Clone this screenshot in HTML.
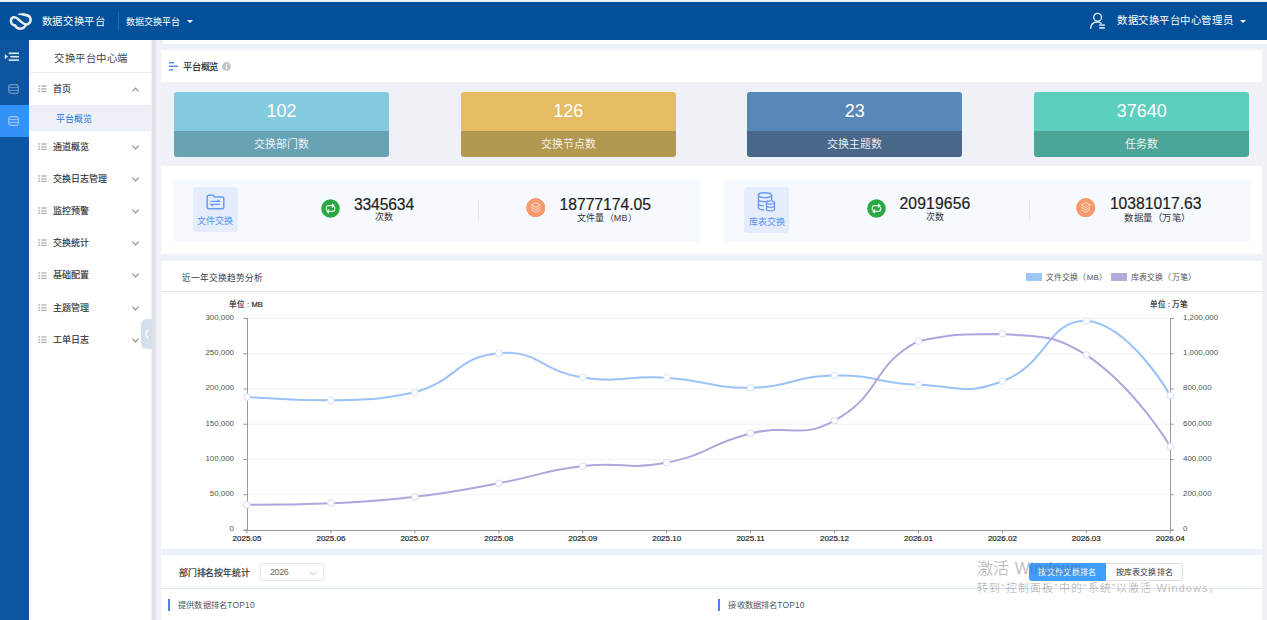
<!DOCTYPE html>
<html lang="zh-CN">
<head>
<meta charset="utf-8">
<title>数据交换平台</title>
<style>
*{margin:0;padding:0;box-sizing:border-box;}
html,body{width:1267px;height:620px;overflow:hidden;background:#eef1f6;font-family:"Liberation Sans",sans-serif;color:#333;}
.abs{position:absolute;}
.t{position:absolute;white-space:nowrap;line-height:1;}
#topline{left:0;top:0;width:1267px;height:2px;background:#eef0f3;}
#header{left:0;top:2px;width:1267px;height:38.4px;background:#03509a;}
#iconbar{left:0;top:40.4px;width:28.8px;height:580px;background:#0d569f;}
#iconact{left:0;top:104.6px;width:28.8px;height:32.4px;background:#3391f7;}
#menu{left:28.8px;top:40px;width:122.5px;height:580px;background:#fff;}
#strip{left:151.5px;top:40px;width:4.5px;height:580px;background:linear-gradient(to right,#dedfe4,#e5e6eb);}
#menusep{left:29px;top:72px;width:122.5px;height:1px;background:#ebebf0;}
#menuhl{left:29px;top:105px;width:122.5px;height:26px;background:#edf1f7;}
.mi{position:absolute;left:53px;font-size:9px;line-height:1;color:#333;font-weight:bold;white-space:nowrap;}
.li{position:absolute;left:38px;width:9px;height:8px;}
.chev{position:absolute;left:132px;width:7px;height:5px;}
.panel{position:absolute;left:161px;width:1101px;background:#fff;}
.card{position:absolute;top:92px;width:215px;height:64.6px;border-radius:3px;overflow:hidden;}
.card .top{position:absolute;left:0;top:0;width:100%;height:38.8px;}
.card .bot{position:absolute;left:0;top:38.8px;width:100%;height:26px;}
.card .num{position:absolute;left:0;width:100%;top:9.3px;text-align:center;font-size:18px;line-height:20px;color:#fff;}
.card .lab{position:absolute;left:0;width:100%;top:8px;text-align:center;font-size:10.9px;line-height:11px;color:rgba(255,255,255,0.9);}
.box{position:absolute;top:178.5px;height:63px;background:#f6f9fe;border-radius:4px;}
.iblk{position:absolute;width:45.5px;height:45.5px;background:#e5edfc;border-radius:4px;}
.iblk .lb{position:absolute;left:0;width:100%;top:30.5px;text-align:center;font-size:9px;line-height:9px;color:#5b8ff2;}
.circ{position:absolute;width:19px;height:19px;border-radius:50%;}
.big{position:absolute;font-size:15.7px;line-height:16px;color:#222;white-space:nowrap;}
.sm{position:absolute;font-size:9px;line-height:9px;color:#333;white-space:nowrap;text-align:center;}
.vd{position:absolute;top:198.5px;width:1px;height:22px;background:#e3e6ee;}
svg text.ax{font-family:"Liberation Sans",sans-serif;font-size:7.9px;fill:#505050;}
svg text.axb{font-family:"Liberation Sans",sans-serif;font-size:8px;fill:#222;stroke:#222;stroke-width:0.18px;}
.wm{position:absolute;color:rgba(95,95,95,0.42);white-space:nowrap;font-family:"Liberation Sans",sans-serif;}
</style>
</head>
<body>
<div id="topline" class="abs"></div>
<div id="header" class="abs"></div>
<!-- logo -->
<svg class="abs" style="left:9px;top:12px" width="24" height="19" viewBox="0 0 24 19">
  <path d="M19.5,3.8 C22.6,5.8 22.4,10.8 18.5,12.3 C15,13.6 11.5,9.2 8.5,6.6 C6,4.4 2.6,4.6 2,8 C1.5,11 3.2,13.2 6,13.4 C7.2,15.8 10,17 12.5,16.6 C14.3,16.3 15.6,15.2 16.2,14" fill="none" stroke="#ececec" stroke-width="2.5" stroke-linecap="round"/>
  <path d="M9.3,2.2 C13,1.2 17.5,1.6 20.2,3.6 L19.5,5 C17,3.6 13,3 9.3,2.2 Z" fill="#f4f4f4" stroke="#f4f4f4" stroke-width="1"/>
</svg>
<div class="t" id="title" style="left:41.50px;top:16.60px;font-size:10.35px;letter-spacing:0.720px;color:#fff;">数据交换平台</div>
<div class="abs" style="left:117.5px;top:12px;width:1px;height:19px;background:#2f66a8;"></div>
<div class="t" id="subtitle" style="left:126.00px;top:18.10px;font-size:9.0px;letter-spacing:0.000px;color:#fff;">数据交换平台</div>
<div class="abs" style="left:186.5px;top:20px;width:0;height:0;border-left:3.2px solid transparent;border-right:3.2px solid transparent;border-top:3.4px solid #fff;"></div>
<!-- user -->
<svg class="abs" style="left:1089px;top:12px" width="18" height="18" viewBox="0 0 18 18">
  <circle cx="8.6" cy="5.2" r="3.9" fill="none" stroke="#eef3f9" stroke-width="1.3"/>
  <path d="M1.6,16.4 C1.9,12.4 4.6,10 8.2,10 C9.9,10 11.2,10.5 12.2,11.3" fill="none" stroke="#eef3f9" stroke-width="1.3" stroke-linecap="round"/>
  <rect x="10.2" y="12.3" width="5.6" height="1.5" fill="#dfe8f2"/>
  <rect x="10.2" y="15.1" width="5.6" height="1.6" fill="#dfe8f2"/>
</svg>
<div class="t" id="username" style="left:1117.00px;top:16.30px;font-size:10.4px;letter-spacing:0.560px;color:#fff;">数据交换平台中心管理员</div>
<div class="abs" style="left:1239.5px;top:20px;width:0;height:0;border-left:3.3px solid transparent;border-right:3.3px solid transparent;border-top:3.6px solid #fff;"></div>

<!-- icon bar -->
<div id="iconbar" class="abs"></div>
<div id="iconact" class="abs"></div>
<svg class="abs" style="left:4px;top:52px" width="16" height="10" viewBox="0 0 16 10">
  <path d="M0.8,1.9 L4,4.6 L0.8,7.3 Z" fill="#e2e9f2"/>
  <rect x="4.7" y="0.5" width="10.3" height="1.6" fill="#e2e9f2"/>
  <rect x="6.3" y="3.9" width="8.7" height="1.6" fill="#e2e9f2"/>
  <rect x="4.7" y="7.3" width="10.3" height="1.6" fill="#e2e9f2"/>
</svg>
<svg class="abs" style="left:7.5px;top:84px" width="11" height="10" viewBox="0 0 11 10">
  <rect x="0.7" y="0.6" width="9.6" height="8.8" rx="3" ry="2.4" fill="none" stroke="#6f97c6" stroke-width="1.1"/>
  <path d="M1,3.6 H10 M1,6.4 H10" stroke="#6f97c6" stroke-width="1"/>
</svg>
<svg class="abs" style="left:7.5px;top:116px" width="11" height="10" viewBox="0 0 11 10">
  <rect x="0.7" y="0.6" width="9.6" height="8.8" rx="3" ry="2.4" fill="none" stroke="#9cc6f6" stroke-width="1.1"/>
  <path d="M1,3.6 H10 M1,6.4 H10" stroke="#9cc6f6" stroke-width="1"/>
</svg>

<!-- menu -->
<div id="menu" class="abs"></div>
<div id="strip" class="abs"></div>
<div id="menusep" class="abs"></div>
<div id="menuhl" class="abs"></div>
<div class="t" id="menutitle" style="left:54.40px;top:53.80px;font-size:10.4px;letter-spacing:0.433px;color:#444;">交换平台中心端</div>
<svg class="li" style="top:85.2px" viewBox="0 0 9 8" width="9" height="8"><g fill="#a8a8a8"><rect x="0.2" y="0.4" width="1.9" height="1.2"/><rect x="0.2" y="3.3" width="1.9" height="1.2"/><rect x="0.2" y="5.8" width="1.9" height="1.2"/><rect x="3.2" y="0.4" width="5.4" height="1.2"/><rect x="3.2" y="3.3" width="5.4" height="1.2"/><rect x="3.2" y="5.8" width="5.4" height="1.2"/></g></svg>
<div class="t" id="mi0" style="left:53.00px;top:84.80px;font-size:9px;letter-spacing:0.000px;color:#333;-webkit-text-stroke:0.15px #333;">首页</div>
<svg class="chev" style="top:86.7px" viewBox="0 0 7 5" width="7" height="5"><path d="M0.4,4.3 L3.5,1 L6.6,4.3" fill="none" stroke="#8c8c8c" stroke-width="1.1"/></svg>
<svg class="li" style="top:143.2px" viewBox="0 0 9 8" width="9" height="8"><g fill="#a8a8a8"><rect x="0.2" y="0.4" width="1.9" height="1.2"/><rect x="0.2" y="3.3" width="1.9" height="1.2"/><rect x="0.2" y="5.8" width="1.9" height="1.2"/><rect x="3.2" y="0.4" width="5.4" height="1.2"/><rect x="3.2" y="3.3" width="5.4" height="1.2"/><rect x="3.2" y="5.8" width="5.4" height="1.2"/></g></svg>
<div class="t" id="mi1" style="left:53.00px;top:142.80px;font-size:9px;letter-spacing:0.000px;color:#333;-webkit-text-stroke:0.15px #333;">通道概览</div>
<svg class="chev" style="top:144.7px" viewBox="0 0 7 5" width="7" height="5"><path d="M0.4,0.7 L3.5,4 L6.6,0.7" fill="none" stroke="#8c8c8c" stroke-width="1.1"/></svg>
<svg class="li" style="top:175.2px" viewBox="0 0 9 8" width="9" height="8"><g fill="#a8a8a8"><rect x="0.2" y="0.4" width="1.9" height="1.2"/><rect x="0.2" y="3.3" width="1.9" height="1.2"/><rect x="0.2" y="5.8" width="1.9" height="1.2"/><rect x="3.2" y="0.4" width="5.4" height="1.2"/><rect x="3.2" y="3.3" width="5.4" height="1.2"/><rect x="3.2" y="5.8" width="5.4" height="1.2"/></g></svg>
<div class="t" id="mi2" style="left:53.00px;top:174.80px;font-size:9px;letter-spacing:0.000px;color:#333;-webkit-text-stroke:0.15px #333;">交换日志管理</div>
<svg class="chev" style="top:176.7px" viewBox="0 0 7 5" width="7" height="5"><path d="M0.4,0.7 L3.5,4 L6.6,0.7" fill="none" stroke="#8c8c8c" stroke-width="1.1"/></svg>
<svg class="li" style="top:207.2px" viewBox="0 0 9 8" width="9" height="8"><g fill="#a8a8a8"><rect x="0.2" y="0.4" width="1.9" height="1.2"/><rect x="0.2" y="3.3" width="1.9" height="1.2"/><rect x="0.2" y="5.8" width="1.9" height="1.2"/><rect x="3.2" y="0.4" width="5.4" height="1.2"/><rect x="3.2" y="3.3" width="5.4" height="1.2"/><rect x="3.2" y="5.8" width="5.4" height="1.2"/></g></svg>
<div class="t" id="mi3" style="left:53.00px;top:206.80px;font-size:9px;letter-spacing:0.000px;color:#333;-webkit-text-stroke:0.15px #333;">监控预警</div>
<svg class="chev" style="top:208.7px" viewBox="0 0 7 5" width="7" height="5"><path d="M0.4,0.7 L3.5,4 L6.6,0.7" fill="none" stroke="#8c8c8c" stroke-width="1.1"/></svg>
<svg class="li" style="top:239.2px" viewBox="0 0 9 8" width="9" height="8"><g fill="#a8a8a8"><rect x="0.2" y="0.4" width="1.9" height="1.2"/><rect x="0.2" y="3.3" width="1.9" height="1.2"/><rect x="0.2" y="5.8" width="1.9" height="1.2"/><rect x="3.2" y="0.4" width="5.4" height="1.2"/><rect x="3.2" y="3.3" width="5.4" height="1.2"/><rect x="3.2" y="5.8" width="5.4" height="1.2"/></g></svg>
<div class="t" id="mi4" style="left:53.00px;top:238.80px;font-size:9px;letter-spacing:0.000px;color:#333;-webkit-text-stroke:0.15px #333;">交换统计</div>
<svg class="chev" style="top:240.7px" viewBox="0 0 7 5" width="7" height="5"><path d="M0.4,0.7 L3.5,4 L6.6,0.7" fill="none" stroke="#8c8c8c" stroke-width="1.1"/></svg>
<svg class="li" style="top:271.5px" viewBox="0 0 9 8" width="9" height="8"><g fill="#a8a8a8"><rect x="0.2" y="0.4" width="1.9" height="1.2"/><rect x="0.2" y="3.3" width="1.9" height="1.2"/><rect x="0.2" y="5.8" width="1.9" height="1.2"/><rect x="3.2" y="0.4" width="5.4" height="1.2"/><rect x="3.2" y="3.3" width="5.4" height="1.2"/><rect x="3.2" y="5.8" width="5.4" height="1.2"/></g></svg>
<div class="t" id="mi5" style="left:53.00px;top:271.10px;font-size:9px;letter-spacing:0.000px;color:#333;-webkit-text-stroke:0.15px #333;">基础配置</div>
<svg class="chev" style="top:273.0px" viewBox="0 0 7 5" width="7" height="5"><path d="M0.4,0.7 L3.5,4 L6.6,0.7" fill="none" stroke="#8c8c8c" stroke-width="1.1"/></svg>
<svg class="li" style="top:304.2px" viewBox="0 0 9 8" width="9" height="8"><g fill="#a8a8a8"><rect x="0.2" y="0.4" width="1.9" height="1.2"/><rect x="0.2" y="3.3" width="1.9" height="1.2"/><rect x="0.2" y="5.8" width="1.9" height="1.2"/><rect x="3.2" y="0.4" width="5.4" height="1.2"/><rect x="3.2" y="3.3" width="5.4" height="1.2"/><rect x="3.2" y="5.8" width="5.4" height="1.2"/></g></svg>
<div class="t" id="mi6" style="left:53.00px;top:303.80px;font-size:9px;letter-spacing:0.000px;color:#333;-webkit-text-stroke:0.15px #333;">主题管理</div>
<svg class="chev" style="top:305.7px" viewBox="0 0 7 5" width="7" height="5"><path d="M0.4,0.7 L3.5,4 L6.6,0.7" fill="none" stroke="#8c8c8c" stroke-width="1.1"/></svg>
<svg class="li" style="top:336.4px" viewBox="0 0 9 8" width="9" height="8"><g fill="#a8a8a8"><rect x="0.2" y="0.4" width="1.9" height="1.2"/><rect x="0.2" y="3.3" width="1.9" height="1.2"/><rect x="0.2" y="5.8" width="1.9" height="1.2"/><rect x="3.2" y="0.4" width="5.4" height="1.2"/><rect x="3.2" y="3.3" width="5.4" height="1.2"/><rect x="3.2" y="5.8" width="5.4" height="1.2"/></g></svg>
<div class="t" id="mi7" style="left:53.00px;top:336.00px;font-size:9px;letter-spacing:0.000px;color:#333;-webkit-text-stroke:0.15px #333;">工单日志</div>
<svg class="chev" style="top:337.9px" viewBox="0 0 7 5" width="7" height="5"><path d="M0.4,0.7 L3.5,4 L6.6,0.7" fill="none" stroke="#8c8c8c" stroke-width="1.1"/></svg>
<div class="t" id="pingtai" style="left:56.00px;top:114.50px;font-size:9.0px;letter-spacing:0.000px;color:#1f73d2;font-weight:500;">平台概览</div>
<div class="abs" style="left:141px;top:319px;width:11px;height:30px;background:#d3dfec;border-radius:6px 0 0 6px;"></div>
<svg class="abs" style="left:144px;top:328px" width="6" height="12" viewBox="0 0 6 12"><path d="M4.5,1 L1.5,6 L4.5,11" fill="none" stroke="#fff" stroke-width="1.1"/></svg>

<!-- top white strip in content -->
<div class="abs" style="left:163px;top:40px;width:1104px;height:4px;background:#fff;"></div>

<!-- panel 1 -->
<div class="panel" style="top:50px;height:32.2px;"></div>
<svg class="abs" style="left:169px;top:61.5px" width="9" height="9" viewBox="0 0 9 9">
  <rect x="0" y="0" width="5" height="1.4" fill="#4b90e6"/>
  <rect x="0" y="3.6" width="9" height="1.4" fill="#4b90e6"/>
  <rect x="0" y="7.2" width="4" height="1.4" fill="#4b90e6"/>
</svg>
<div class="t" id="ptgl" style="left:183.10px;top:62.50px;font-size:9.2px;letter-spacing:-0.200px;color:#222;-webkit-text-stroke:0.12px #222;">平台概览</div>
<svg class="abs" style="left:221.5px;top:61.5px" width="9" height="9" viewBox="0 0 9 9">
  <circle cx="4.5" cy="4.5" r="4.4" fill="#c4c4c4"/>
  <rect x="3.9" y="3.6" width="1.3" height="3.6" fill="#fff"/>
  <rect x="3.9" y="1.8" width="1.3" height="1.2" fill="#fff"/>
</svg>

<!-- cards -->
<div class="card" style="left:174px;"><div class="top" style="background:#84cbe0"></div><div class="bot" style="background:#6aa2b5"></div><div class="num">102</div><div class="bot"><div class="lab">交换部门数</div></div></div>
<div class="card" style="left:460.7px;"><div class="top" style="background:#e5bb63"></div><div class="bot" style="background:#b39851"></div><div class="num">126</div><div class="bot"><div class="lab">交换节点数</div></div></div>
<div class="card" style="left:747.2px;"><div class="top" style="background:#5987b7"></div><div class="bot" style="background:#486789"></div><div class="num">23</div><div class="bot"><div class="lab">交换主题数</div></div></div>
<div class="card" style="left:1034.3px;"><div class="top" style="background:#5dcfbe"></div><div class="bot" style="background:#4ba598"></div><div class="num">37640</div><div class="bot"><div class="lab">任务数</div></div></div>

<!-- panel 2 -->
<div class="panel" style="top:166.2px;height:87.8px;"></div>
<div class="box" style="left:172.5px;width:528px;"></div>
<div class="box" style="left:722.5px;width:528px;"></div>
<div class="iblk" style="left:192.5px;top:186.7px;"><div class="lb">文件交换</div></div>
<svg class="abs" style="left:206px;top:194px" width="19" height="16" viewBox="0 0 19 16">
  <path d="M1.2,3 C1.2,2 1.8,1.3 2.8,1.3 H7 L8.6,3 H16 C17,3 17.8,3.8 17.8,4.8 V13 C17.8,14 17,14.8 16,14.8 H2.8 C1.8,14.8 1.2,14 1.2,13 Z" fill="none" stroke="#6a9bf3" stroke-width="1.5"/>
  <path d="M4.5,7.4 H13.5 L11.5,5.8 M14,10.4 H5 L7,12" fill="none" stroke="#6a9bf3" stroke-width="1.3"/>
</svg>
<div class="iblk" style="left:743.8px;top:187px;"><div class="lb">库表交换</div></div>
<svg class="abs" style="left:757px;top:191.5px" width="19" height="20" viewBox="0 0 19 20">
  <ellipse cx="8" cy="3.2" rx="6.6" ry="2.4" fill="none" stroke="#6a9bf3" stroke-width="1.4"/>
  <path d="M1.4,3.2 V15.5 C1.4,16.8 3.5,17.8 7,17.9 M14.6,3.2 V8 M1.4,7.5 C1.4,8.8 4,9.6 8,9.6 C9.5,9.6 10.5,9.5 11.5,9.2 M1.4,11.8 C1.4,13 3.2,13.7 7,13.9" fill="none" stroke="#6a9bf3" stroke-width="1.4"/>
  <ellipse cx="13.5" cy="10.5" rx="4" ry="1.6" fill="#e5edfc" stroke="#6a9bf3" stroke-width="1.3"/>
  <path d="M9.5,10.5 V17.3 C9.5,18.2 11.3,18.9 13.5,18.9 C15.7,18.9 17.5,18.2 17.5,17.3 V10.5 M9.5,13.8 C9.5,14.7 11.3,15.3 13.5,15.3 C15.7,15.3 17.5,14.7 17.5,13.8" fill="none" stroke="#6a9bf3" stroke-width="1.3"/>
</svg>
<div class="vd" style="left:477.5px"></div>
<div class="vd" style="left:1028.5px"></div>
<svg class="abs" style="left:320.9px;top:199.2px" width="19" height="19" viewBox="0 0 19 19"><circle cx="9.5" cy="9.5" r="9.3" fill="#29a841"/><path d="M5.3,10.6 V8.7 C5.3,7.6 6.1,6.7 7.3,6.7 H13 M11.4,5.2 L13.1,6.7 L11.4,8.2 M13.7,8.4 V10.3 C13.7,11.4 12.9,12.3 11.7,12.3 H6 M7.6,13.8 L5.9,12.3 L7.6,10.8" fill="none" stroke="#e6f4e8" stroke-width="1.25" stroke-linecap="round" stroke-linejoin="round"/></svg>
<svg class="abs" style="left:525.5999999999999px;top:198.10000000000002px" width="19.4" height="19.4" viewBox="0 0 19.4 19.4"><circle cx="9.7" cy="9.7" r="9.6" fill="#f49a6d"/><path d="M9.7,4.6 L14.2,7 L9.7,9.4 L5.2,7 Z" fill="none" stroke="#fde3d5" stroke-width="0.9"/><path d="M5.2,9.4 L9.7,11.8 L14.2,9.4 M5.2,11.8 L9.7,14.2 L14.2,11.8" fill="none" stroke="#fde3d5" stroke-width="0.9"/></svg>
<svg class="abs" style="left:867.0px;top:199.2px" width="19" height="19" viewBox="0 0 19 19"><circle cx="9.5" cy="9.5" r="9.3" fill="#29a841"/><path d="M5.3,10.6 V8.7 C5.3,7.6 6.1,6.7 7.3,6.7 H13 M11.4,5.2 L13.1,6.7 L11.4,8.2 M13.7,8.4 V10.3 C13.7,11.4 12.9,12.3 11.7,12.3 H6 M7.6,13.8 L5.9,12.3 L7.6,10.8" fill="none" stroke="#e6f4e8" stroke-width="1.25" stroke-linecap="round" stroke-linejoin="round"/></svg>
<svg class="abs" style="left:1076.3px;top:198.0px" width="19.4" height="19.4" viewBox="0 0 19.4 19.4"><circle cx="9.7" cy="9.7" r="9.6" fill="#f49a6d"/><path d="M9.7,4.6 L14.2,7 L9.7,9.4 L5.2,7 Z" fill="none" stroke="#fde3d5" stroke-width="0.9"/><path d="M5.2,9.4 L9.7,11.8 L14.2,9.4 M5.2,11.8 L9.7,14.2 L14.2,11.8" fill="none" stroke="#fde3d5" stroke-width="0.9"/></svg>
<div class="t" id="n3345634" style="left:353.90px;top:196.50px;font-size:15.7px;letter-spacing:-0.133px;color:#1e1e1e;-webkit-text-stroke:0.2px #222;">3345634</div>
<div class="t" id="cishu1" style="left:375.30px;top:213.00px;font-size:9px;letter-spacing:0.000px;color:#333;">次数</div>
<div class="t" id="n1877" style="left:559.50px;top:196.95px;font-size:15.7px;letter-spacing:-0.010px;color:#1e1e1e;-webkit-text-stroke:0.2px #222;">18777174.05</div>
<div class="t" id="wjl" style="left:577.00px;top:213.50px;font-size:9px;letter-spacing:0.200px;color:#333;">文件量（MB）</div>
<div class="t" id="n2091" style="left:899.50px;top:196.05px;font-size:15.7px;letter-spacing:0.143px;color:#1e1e1e;-webkit-text-stroke:0.2px #222;">20919656</div>
<div class="t" id="cishu2" style="left:925.50px;top:212.50px;font-size:9px;letter-spacing:0.000px;color:#333;">次数</div>
<div class="t" id="n1038" style="left:1109.90px;top:196.20px;font-size:15.7px;letter-spacing:0.000px;color:#1e1e1e;-webkit-text-stroke:0.2px #222;">10381017.63</div>
<div class="t" id="sjl" style="left:1124.00px;top:212.50px;font-size:9.4px;letter-spacing:0.567px;color:#333;">数据量（万笔）</div>

<!-- panel 3 chart -->
<div class="panel" style="top:260.5px;height:288.3px;"></div>
<div class="t" id="charttitle" style="left:182.00px;top:273.60px;font-size:8.7px;letter-spacing:0.050px;color:#3a3a3a;">近一年交换趋势分析</div>
<div class="abs" style="left:161px;top:291px;width:1101px;height:1px;background:#dfe7f1;"></div>
<div class="abs" style="left:1026px;top:272.8px;width:16px;height:8.6px;background:#9ec4f8;"></div>
<div class="t" id="leg1" style="left:1045.50px;top:273.50px;font-size:8.0px;letter-spacing:0.229px;color:#555;">文件交换（MB）</div>
<div class="abs" style="left:1111.4px;top:272.8px;width:16px;height:8.6px;background:#b4aade;"></div>
<div class="t" id="leg2" style="left:1131.10px;top:273.50px;font-size:8.0px;letter-spacing:0.086px;color:#555;">库表交换（万笔）</div>
<div class="t" id="unitMB" style="left:228.50px;top:300.75px;font-size:7.6px;letter-spacing:0.117px;color:#222;-webkit-text-stroke:0.2px #333;">单位 : MB</div>
<div class="t" id="unitWB" style="left:1150.00px;top:301.00px;font-size:7.6px;letter-spacing:-0.042px;color:#222;-webkit-text-stroke:0.2px #333;">单位 : 万笔</div>
<svg class="abs" style="left:0;top:0" width="1267" height="620" viewBox="0 0 1267 620">
<line x1="247.5" y1="494.75" x2="1170" y2="494.75" stroke="#f1f2f6" stroke-width="1"/>
<line x1="247.5" y1="459.50" x2="1170" y2="459.50" stroke="#f1f2f6" stroke-width="1"/>
<line x1="247.5" y1="424.25" x2="1170" y2="424.25" stroke="#f1f2f6" stroke-width="1"/>
<line x1="247.5" y1="389.00" x2="1170" y2="389.00" stroke="#f1f2f6" stroke-width="1"/>
<line x1="247.5" y1="353.75" x2="1170" y2="353.75" stroke="#f1f2f6" stroke-width="1"/>
<line x1="247.5" y1="318.50" x2="1170" y2="318.50" stroke="#f1f2f6" stroke-width="1"/>
<line x1="247.5" y1="318" x2="247.5" y2="531" stroke="#999" stroke-width="1"/>
<line x1="1170.5" y1="318" x2="1170.5" y2="531" stroke="#999" stroke-width="1"/>
<line x1="243.5" y1="530.5" x2="1174" y2="530.5" stroke="#999" stroke-width="1"/>
<line x1="243.5" y1="530.00" x2="247" y2="530.00" stroke="#999" stroke-width="1"/>
<line x1="1170.25" y1="530.00" x2="1173.75" y2="530.00" stroke="#999" stroke-width="1"/>
<line x1="243.5" y1="494.75" x2="247" y2="494.75" stroke="#999" stroke-width="1"/>
<line x1="1170.25" y1="494.75" x2="1173.75" y2="494.75" stroke="#999" stroke-width="1"/>
<line x1="243.5" y1="459.50" x2="247" y2="459.50" stroke="#999" stroke-width="1"/>
<line x1="1170.25" y1="459.50" x2="1173.75" y2="459.50" stroke="#999" stroke-width="1"/>
<line x1="243.5" y1="424.25" x2="247" y2="424.25" stroke="#999" stroke-width="1"/>
<line x1="1170.25" y1="424.25" x2="1173.75" y2="424.25" stroke="#999" stroke-width="1"/>
<line x1="243.5" y1="389.00" x2="247" y2="389.00" stroke="#999" stroke-width="1"/>
<line x1="1170.25" y1="389.00" x2="1173.75" y2="389.00" stroke="#999" stroke-width="1"/>
<line x1="243.5" y1="353.75" x2="247" y2="353.75" stroke="#999" stroke-width="1"/>
<line x1="1170.25" y1="353.75" x2="1173.75" y2="353.75" stroke="#999" stroke-width="1"/>
<line x1="243.5" y1="318.50" x2="247" y2="318.50" stroke="#999" stroke-width="1"/>
<line x1="1170.25" y1="318.50" x2="1173.75" y2="318.50" stroke="#999" stroke-width="1"/>
<line x1="247.00" y1="530" x2="247.00" y2="533.5" stroke="#999" stroke-width="1"/>
<line x1="330.93" y1="530" x2="330.93" y2="533.5" stroke="#999" stroke-width="1"/>
<line x1="414.86" y1="530" x2="414.86" y2="533.5" stroke="#999" stroke-width="1"/>
<line x1="498.80" y1="530" x2="498.80" y2="533.5" stroke="#999" stroke-width="1"/>
<line x1="582.73" y1="530" x2="582.73" y2="533.5" stroke="#999" stroke-width="1"/>
<line x1="666.66" y1="530" x2="666.66" y2="533.5" stroke="#999" stroke-width="1"/>
<line x1="750.59" y1="530" x2="750.59" y2="533.5" stroke="#999" stroke-width="1"/>
<line x1="834.52" y1="530" x2="834.52" y2="533.5" stroke="#999" stroke-width="1"/>
<line x1="918.45" y1="530" x2="918.45" y2="533.5" stroke="#999" stroke-width="1"/>
<line x1="1002.39" y1="530" x2="1002.39" y2="533.5" stroke="#999" stroke-width="1"/>
<line x1="1086.32" y1="530" x2="1086.32" y2="533.5" stroke="#999" stroke-width="1"/>
<line x1="1170.25" y1="530" x2="1170.25" y2="533.5" stroke="#999" stroke-width="1"/>
<path d="M247.00,397.10 C247.00,397.10 289.05,400.30 330.93,400.30 C372.98,399.10 374.86,400.30 414.86,392.30 C458.79,379.97 455.61,357.01 498.80,353.20 C539.55,349.61 539.92,371.25 582.73,377.50 C623.85,383.50 624.84,375.18 666.66,377.70 C708.77,380.23 708.70,388.15 750.59,387.60 C792.63,387.05 792.47,376.23 834.52,375.50 C876.40,374.78 876.38,383.25 918.45,384.70 C960.31,386.15 964.78,395.62 1002.39,381.30 C1048.71,363.67 1046.08,320.80 1086.32,320.80 C1130.01,324.50 1170.25,395.50 1170.25,395.50" fill="none" stroke="#9ac2f8" stroke-width="2"/>
<path d="M247.00,504.80 C247.00,504.80 289.02,504.80 330.93,503.20 C372.95,501.20 373.11,501.77 414.86,496.80 C457.04,491.77 456.98,490.85 498.80,483.20 C540.92,475.50 540.35,471.30 582.73,466.10 C624.28,461.00 625.87,470.52 666.66,462.60 C709.80,454.22 707.68,444.24 750.59,433.50 C791.61,423.24 798.97,440.15 834.52,420.60 C882.90,394.00 869.92,366.27 918.45,341.20 C953.85,333.90 960.98,333.90 1002.39,333.90 C1044.91,337.37 1051.87,333.90 1086.32,354.90 C1135.81,388.13 1170.25,446.60 1170.25,446.60" fill="none" stroke="#b0a5dc" stroke-width="2"/>
<circle cx="247.00" cy="397.1" r="3.3" fill="#fff" stroke="#d2e3fb" stroke-width="1"/>
<circle cx="330.93" cy="400.3" r="3.3" fill="#fff" stroke="#d2e3fb" stroke-width="1"/>
<circle cx="414.86" cy="392.3" r="3.3" fill="#fff" stroke="#d2e3fb" stroke-width="1"/>
<circle cx="498.80" cy="353.2" r="3.3" fill="#fff" stroke="#d2e3fb" stroke-width="1"/>
<circle cx="582.73" cy="377.5" r="3.3" fill="#fff" stroke="#d2e3fb" stroke-width="1"/>
<circle cx="666.66" cy="377.7" r="3.3" fill="#fff" stroke="#d2e3fb" stroke-width="1"/>
<circle cx="750.59" cy="387.6" r="3.3" fill="#fff" stroke="#d2e3fb" stroke-width="1"/>
<circle cx="834.52" cy="375.5" r="3.3" fill="#fff" stroke="#d2e3fb" stroke-width="1"/>
<circle cx="918.45" cy="384.7" r="3.3" fill="#fff" stroke="#d2e3fb" stroke-width="1"/>
<circle cx="1002.39" cy="381.3" r="3.3" fill="#fff" stroke="#d2e3fb" stroke-width="1"/>
<circle cx="1086.32" cy="320.8" r="3.3" fill="#fff" stroke="#d2e3fb" stroke-width="1"/>
<circle cx="1170.25" cy="395.5" r="3.3" fill="#fff" stroke="#d2e3fb" stroke-width="1"/>
<circle cx="247.00" cy="504.8" r="3.3" fill="#fff" stroke="#dcd6f0" stroke-width="1"/>
<circle cx="330.93" cy="503.2" r="3.3" fill="#fff" stroke="#dcd6f0" stroke-width="1"/>
<circle cx="414.86" cy="496.8" r="3.3" fill="#fff" stroke="#dcd6f0" stroke-width="1"/>
<circle cx="498.80" cy="483.2" r="3.3" fill="#fff" stroke="#dcd6f0" stroke-width="1"/>
<circle cx="582.73" cy="466.1" r="3.3" fill="#fff" stroke="#dcd6f0" stroke-width="1"/>
<circle cx="666.66" cy="462.6" r="3.3" fill="#fff" stroke="#dcd6f0" stroke-width="1"/>
<circle cx="750.59" cy="433.5" r="3.3" fill="#fff" stroke="#dcd6f0" stroke-width="1"/>
<circle cx="834.52" cy="420.6" r="3.3" fill="#fff" stroke="#dcd6f0" stroke-width="1"/>
<circle cx="918.45" cy="341.2" r="3.3" fill="#fff" stroke="#dcd6f0" stroke-width="1"/>
<circle cx="1002.39" cy="333.9" r="3.3" fill="#fff" stroke="#dcd6f0" stroke-width="1"/>
<circle cx="1086.32" cy="354.9" r="3.3" fill="#fff" stroke="#dcd6f0" stroke-width="1"/>
<circle cx="1170.25" cy="446.6" r="3.3" fill="#fff" stroke="#dcd6f0" stroke-width="1"/>
<text x="234" y="531.40" text-anchor="end" class="ax">0</text>
<text x="234" y="496.15" text-anchor="end" class="ax">50,000</text>
<text x="234" y="460.90" text-anchor="end" class="ax">100,000</text>
<text x="234" y="425.65" text-anchor="end" class="ax">150,000</text>
<text x="234" y="390.40" text-anchor="end" class="ax">200,000</text>
<text x="234" y="355.15" text-anchor="end" class="ax">250,000</text>
<text x="234" y="319.90" text-anchor="end" class="ax">300,000</text>
<text x="1183" y="531.40" text-anchor="start" class="ax">0</text>
<text x="1183" y="496.15" text-anchor="start" class="ax">200,000</text>
<text x="1183" y="460.90" text-anchor="start" class="ax">400,000</text>
<text x="1183" y="425.65" text-anchor="start" class="ax">600,000</text>
<text x="1183" y="390.40" text-anchor="start" class="ax">800,000</text>
<text x="1183" y="355.15" text-anchor="start" class="ax">1,000,000</text>
<text x="1183" y="319.90" text-anchor="start" class="ax">1,200,000</text>
<text x="247.00" y="541" text-anchor="middle" class="axb">2025.05</text>
<text x="330.93" y="541" text-anchor="middle" class="axb">2025.06</text>
<text x="414.86" y="541" text-anchor="middle" class="axb">2025.07</text>
<text x="498.80" y="541" text-anchor="middle" class="axb">2025.08</text>
<text x="582.73" y="541" text-anchor="middle" class="axb">2025.09</text>
<text x="666.66" y="541" text-anchor="middle" class="axb">2025.10</text>
<text x="750.59" y="541" text-anchor="middle" class="axb">2025.11</text>
<text x="834.52" y="541" text-anchor="middle" class="axb">2025.12</text>
<text x="918.45" y="541" text-anchor="middle" class="axb">2026.01</text>
<text x="1002.39" y="541" text-anchor="middle" class="axb">2026.02</text>
<text x="1086.32" y="541" text-anchor="middle" class="axb">2026.03</text>
<text x="1170.25" y="541" text-anchor="middle" class="axb">2026.04</text>
</svg>

<!-- panel 4 -->
<div class="panel" style="top:554.8px;height:70px;"></div>
<div class="t" id="bmpm" style="left:178.90px;top:569.00px;font-size:8.9px;letter-spacing:-0.143px;color:#333;-webkit-text-stroke:0.2px #333;">部门排名按年统计</div>
<div class="abs" style="left:259.5px;top:563.2px;width:64.5px;height:18px;border:1px solid #e0e3ea;border-radius:3px;background:#fff;"></div>
<div class="t" id="y2026" style="left:270.00px;top:568.00px;font-size:9.0px;letter-spacing:-0.400px;color:#666;">2026</div>
<svg class="abs" style="left:309px;top:571px" width="8" height="5" viewBox="0 0 8 5"><path d="M0.5,0.8 L4,4 L7.5,0.8" fill="none" stroke="#c0c4cc" stroke-width="0.9"/></svg>
<div class="abs" style="left:161px;top:588px;width:1101px;height:1px;background:#dbe5f1;"></div>
<div class="abs" style="left:167.5px;top:598.7px;width:2px;height:12.3px;background:#4f80ee;"></div>
<div class="t" id="tgsj" style="left:177.80px;top:601.00px;font-size:8.4px;letter-spacing:0.240px;color:#555;">提供数据排名TOP10</div>
<div class="abs" style="left:717.5px;top:598.7px;width:2px;height:12.3px;background:#4f80ee;"></div>
<div class="t" id="jssj" style="left:728.40px;top:601.00px;font-size:8.4px;letter-spacing:0.160px;color:#555;">接收数据排名TOP10</div>
<div class="abs" style="left:1029px;top:563.3px;width:77px;height:17.7px;background:#409eff;border-radius:3px 0 0 3px;"></div>
<div class="t" id="btn1" style="left:1038.20px;top:569.10px;font-size:8.0px;letter-spacing:0.367px;color:#fff;">按文件交换排名</div>
<div class="abs" style="left:1106px;top:563.3px;width:76.5px;height:17.7px;background:#fff;border:1px solid #dcdfe6;border-left:none;border-radius:0 3px 3px 0;"></div>
<div class="t" id="btn2" style="left:1115.50px;top:569.10px;font-size:8.0px;letter-spacing:0.233px;color:#333;">按库表交换排名</div>

<!-- windows watermark -->
<div class="wm" style="left:977px;top:560px;font-size:16px;line-height:17px;letter-spacing:0.4px;">激活 Windows</div>
<div class="wm" style="left:977px;top:582px;font-size:11px;line-height:13px;letter-spacing:1.05px;">转到“控制面板”中的“系统”以激活 Windows。</div>
</body>
</html>
